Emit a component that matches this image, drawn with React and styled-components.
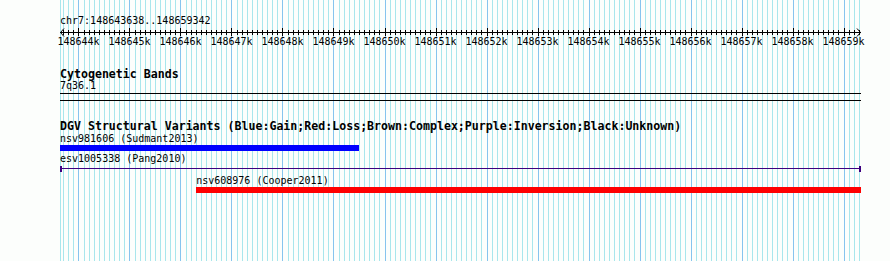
import styled, { createGlobalStyle } from 'styled-components';

const START = 148643638;
const END = 148659342;
const WIDTH = 801;
const PX = WIDTH / (END - START);
const toX = (bp) => (bp - START) * PX;

const features = [
  { id: 'nsv981606', source: 'Sudmant2013', start: START, end: 148649505, color: '#0000ff', kind: 'bar' },
  { id: 'esv1005338', source: 'Pang2010', start: START, end: END, color: '#3d0080', kind: 'line' },
  { id: 'nsv608976', source: 'Cooper2011', start: 148646308, end: END + 40, color: '#ff0000', kind: 'bar' },
];

const GlobalStyle = createGlobalStyle`
  html, body {
    margin: 0;
    padding: 0;
    background: #fcfefc;
  }
  body {
    font-family: "DejaVu Sans Mono", "Liberation Mono", monospace;
    color: #000;
  }
`;

const Page = styled.div`
  position: relative;
  width: 890px;
  height: 261px;
  overflow: hidden;
  padding-left: 60px;
  box-sizing: border-box;
`;

const GridLayer = styled.svg`
  position: absolute;
  left: 60px;
  top: 0;
  z-index: 0;
`;

const Tracks = styled.div`
  position: relative;
  z-index: 1;
  width: ${WIDTH}px;
  display: flex;
  flex-direction: column;
`;

const Ruler = styled.div`
  padding-top: 15px;
  height: 53px;
  box-sizing: border-box;
`;

const SmallText = styled.div`
  font-size: 10px;
  line-height: 12px;
  height: 12px;
  white-space: nowrap;
`;

const Axis = styled.svg`
  display: block;
  overflow: visible;
`;

const TickLabels = styled.div`
  position: relative;
  height: 12px;
  margin-top: -1px;
  font-size: 10px;
  line-height: 12px;
`;

const TickLabel = styled.span`
  position: absolute;
  top: 0;
  transform: translateX(-50%);
  white-space: nowrap;
`;

const Track = styled.section`
  display: flex;
  flex-direction: column;
  margin-top: ${(p) => p.$gap}px;
`;

const TrackTitle = styled.div`
  font-size: 11.6px;
  font-weight: bold;
  line-height: 12px;
  height: 12px;
  white-space: nowrap;
`;

const Band = styled.div`
  height: 6px;
  border-top: 1px solid #000;
  border-bottom: 1px solid #000;
  margin-top: 1px;
`;

const FeatureRow = styled.div`
  display: flex;
  flex-direction: column;
  align-items: flex-start;
  margin-top: ${(p) => p.$gap || 0}px;
`;

const Bar = styled.div`
  height: 6px;
  background: ${(p) => p.$color};
`;

const Span = styled.div`
  position: relative;
  height: 8px;
  &::before {
    content: '';
    position: absolute;
    left: 0;
    right: 0;
    top: 3px;
    height: 1px;
    background: ${(p) => p.$color};
  }
  &::after {
    content: '';
    position: absolute;
    left: 0;
    right: 0;
    top: 1px;
    height: 6px;
    border-left: 2px solid ${(p) => p.$color};
    border-right: 2px solid ${(p) => p.$color};
    box-sizing: border-box;
  }
`;

function Grid() {
  const lines = [];
  lines.push(<line key="edge" x1={0.5} x2={0.5} y1={0} y2={261} stroke="#a8e6ec" />);
  for (let bp = Math.ceil(START / 100) * 100; bp <= END; bp += 100) {
    const x = Math.round(toX(bp)) + 0.5;
    const major = bp % 1000 === 0;
    lines.push(
      <line key={bp} x1={x} x2={x} y1={0} y2={261} stroke={major ? '#86c4ee' : '#a8e6ec'} strokeWidth={1} />
    );
  }
  return (
    <GridLayer width={WIDTH} height={261}>
      {lines}
    </GridLayer>
  );
}

function ScaleBar() {
  const ticks = [];
  const labels = [];
  for (let bp = Math.ceil(START / 100) * 100; bp <= END; bp += 100) {
    const x = Math.round(toX(bp)) + 0.5;
    const major = bp % 1000 === 0;
    ticks.push(<line key={bp} x1={x} x2={x} y1={major ? 1 : 3} y2={major ? 9 : 8} stroke="#000" />);
    if (major) {
      labels.push(
        <TickLabel key={bp} style={{ left: toX(bp) }}>
          {bp / 1000}k
        </TickLabel>
      );
    }
  }
  return (
    <Ruler>
      <SmallText>chr7:{START}..{END}</SmallText>
      <Axis width={WIDTH} height={10}>
        <line x1={0} x2={WIDTH} y1={5.5} y2={5.5} stroke="#000" />
        <polyline points="4,1.5 0.5,5.5 4,9.5" fill="none" stroke="#000" />
        <polyline points={`${WIDTH - 4},1.5 ${WIDTH - 0.5},5.5 ${WIDTH - 4},9.5`} fill="none" stroke="#000" />
        {ticks}
      </Axis>
      <TickLabels>{labels}</TickLabels>
    </Ruler>
  );
}

function Feature({ f, gap }) {
  const left = Math.max(0, toX(f.start));
  const width = Math.min(WIDTH, toX(f.end)) - left;
  return (
    <FeatureRow $gap={gap} style={{ marginLeft: left }}>
      <SmallText>
        {f.id} ({f.source})
      </SmallText>
      {f.kind === 'bar' ? (
        <Bar $color={f.color} style={{ width }} />
      ) : (
        <Span $color={f.color} style={{ width }} />
      )}
    </FeatureRow>
  );
}

export default function App() {
  return (
    <Page>
      <GlobalStyle />
      <Grid />
      <Tracks>
        <ScaleBar />
        <Track $gap={15}>
          <TrackTitle>Cytogenetic Bands</TrackTitle>
          <SmallText>7q36.1</SmallText>
          <Band />
        </Track>
        <Track $gap={19}>
          <TrackTitle>DGV Structural Variants (Blue:Gain;Red:Loss;Brown:Complex;Purple:Inversion;Black:Unknown)</TrackTitle>
          {features.map((f, i) => (
            <Feature key={f.id} f={f} gap={i === 0 ? 1 : 2} />
          ))}
        </Track>
      </Tracks>
    </Page>
  );
}
